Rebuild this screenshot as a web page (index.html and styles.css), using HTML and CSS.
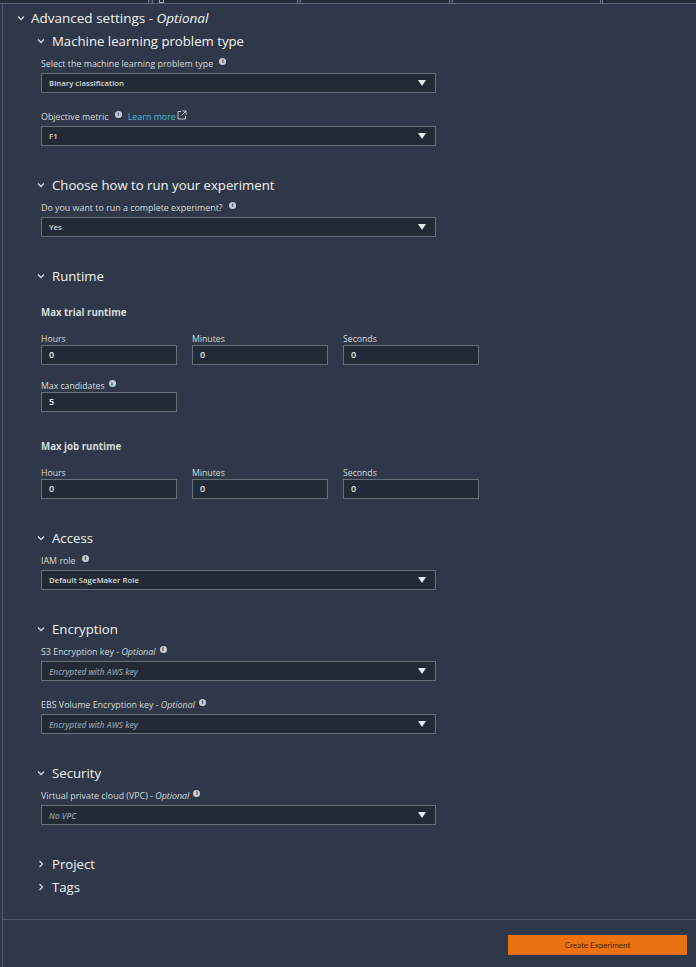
FILE: index.html
```html
<!DOCTYPE html>
<html>
<head>
<meta charset="utf-8">
<link rel="stylesheet" href="styles.css">
</head>
<body>
<div class="tabs">
  <div class="tab t1"></div>
  <div class="tab t2"><span class="tab-icon"></span></div>
  <div class="tab t3"></div>
  <div class="tab t4"></div>
  <div class="tab t5"></div>
</div>
<div class="panel">
  <div class="content">
    <div class="adv-header">
      <svg class="chev" width="8" height="6" viewBox="0 0 8 6"><path d="M1 1.5 L4 4.5 L7 1.5" fill="none" stroke="#d5dbdb" stroke-width="1.3"/></svg>
      <span>Advanced settings - <em>Optional</em></span>
    </div>

    <div class="section">
      <div class="sec-header">
        <svg class="chev" width="8" height="6" viewBox="0 0 8 6"><path d="M1 1.5 L4 4.5 L7 1.5" fill="none" stroke="#d5dbdb" stroke-width="1.3"/></svg>
        <span>Machine learning problem type</span>
      </div>
      <div class="label first">Select the machine learning problem type <span class="info">i</span></div>
      <div class="select"><span>Binary classification</span><span class="caret"></span></div>
      <div class="label">Objective metric <span class="info">i</span> <a class="learn">Learn more<svg class="ext" width="10" height="10" viewBox="0 0 10 10"><path d="M5.5 1 H9 V4.5 M9 1 L4.5 5.5 M4 1.5 H1 V9 H8.5 V6" fill="none" stroke="#d5dbdb" stroke-width="0.9"/></svg></a></div>
      <div class="select"><span>F1</span><span class="caret"></span></div>
    </div>

    <div class="section">
      <div class="sec-header">
        <svg class="chev" width="8" height="6" viewBox="0 0 8 6"><path d="M1 1.5 L4 4.5 L7 1.5" fill="none" stroke="#d5dbdb" stroke-width="1.3"/></svg>
        <span>Choose how to run your experiment</span>
      </div>
      <div class="label first">Do you want to run a complete experiment? <span class="info">i</span></div>
      <div class="select"><span>Yes</span><span class="caret"></span></div>
    </div>

    <div class="section">
      <div class="sec-header">
        <svg class="chev" width="8" height="6" viewBox="0 0 8 6"><path d="M1 1.5 L4 4.5 L7 1.5" fill="none" stroke="#d5dbdb" stroke-width="1.3"/></svg>
        <span>Runtime</span>
      </div>
      <div class="subhead">Max trial runtime</div>
      <div class="row">
        <div class="field"><div class="flabel">Hours</div><div class="input">0</div></div>
        <div class="field"><div class="flabel">Minutes</div><div class="input">0</div></div>
        <div class="field"><div class="flabel">Seconds</div><div class="input">0</div></div>
      </div>
      <div class="row">
        <div class="field"><div class="flabel cand">Max candidates <span class="info">i</span></div><div class="input">5</div></div>
      </div>
      <div class="subhead job">Max job runtime</div>
      <div class="row">
        <div class="field"><div class="flabel">Hours</div><div class="input">0</div></div>
        <div class="field"><div class="flabel">Minutes</div><div class="input">0</div></div>
        <div class="field"><div class="flabel">Seconds</div><div class="input">0</div></div>
      </div>
    </div>

    <div class="section">
      <div class="sec-header">
        <svg class="chev" width="8" height="6" viewBox="0 0 8 6"><path d="M1 1.5 L4 4.5 L7 1.5" fill="none" stroke="#d5dbdb" stroke-width="1.3"/></svg>
        <span>Access</span>
      </div>
      <div class="label first">IAM role <span class="info">i</span></div>
      <div class="select"><span>Default SageMaker Role</span><span class="caret"></span></div>
    </div>

    <div class="section">
      <div class="sec-header">
        <svg class="chev" width="8" height="6" viewBox="0 0 8 6"><path d="M1 1.5 L4 4.5 L7 1.5" fill="none" stroke="#d5dbdb" stroke-width="1.3"/></svg>
        <span>Encryption</span>
      </div>
      <div class="label first">S3 Encryption key - <em>Optional</em> <span class="info">i</span></div>
      <div class="select placeholder"><span>Encrypted with AWS key</span><span class="caret"></span></div>
      <div class="label">EBS Volume Encryption key - <em>Optional</em> <span class="info">i</span></div>
      <div class="select placeholder"><span>Encrypted with AWS key</span><span class="caret"></span></div>
    </div>

    <div class="section">
      <div class="sec-header">
        <svg class="chev" width="8" height="6" viewBox="0 0 8 6"><path d="M1 1.5 L4 4.5 L7 1.5" fill="none" stroke="#d5dbdb" stroke-width="1.3"/></svg>
        <span>Security</span>
      </div>
      <div class="label first">Virtual private cloud (VPC) - <em>Optional</em> <span class="info">i</span></div>
      <div class="select placeholder"><span>No VPC</span><span class="caret"></span></div>
    </div>

    <div class="section collapsed">
      <div class="sec-header">
        <svg class="chev" width="8" height="8" viewBox="0 0 8 8"><path d="M2.5 1 L5.5 4 L2.5 7" fill="none" stroke="#d5dbdb" stroke-width="1.3"/></svg>
        <span>Project</span>
      </div>
      <div class="sec-header tags">
        <svg class="chev" width="8" height="8" viewBox="0 0 8 8"><path d="M2.5 1 L5.5 4 L2.5 7" fill="none" stroke="#d5dbdb" stroke-width="1.3"/></svg>
        <span>Tags</span>
      </div>
    </div>
  </div>
  <div class="footer">
    <button class="create">Create Experiment</button>
  </div>
</div>
</body>
</html>
```

FILE: styles.css
```css
* { box-sizing: border-box; }
html, body {
  margin: 0;
  padding: 0;
  background: #2e3848;
  height: 100%;
}
body {
  font-family: "Open Sans", "Noto Sans", sans-serif;
  color: #d5dbdb;
  overflow: hidden;
}
.tabs {
  display: flex;
  height: 4px;
  border-bottom: 1px solid #5c6675;
}
.tab {
  height: 3px;
  background: #242d39;
  border-left: 1px solid #6a7482;
  border-right: 1px solid #6a7482;
}
.t1 { width: 149px; border-left: none; }
.t2 { width: 146px; margin-left: 3px; position: relative; }
.tab-icon { position: absolute; left: 6px; top: 0; width: 5px; height: 3px; border: 1px solid #aab; border-top: none; }
.t3 { width: 150px; margin-left: 2px; }
.t4 { width: 149px; margin-left: 2px; }
.t5 { flex: 1; margin-left: 1px; border-right: none; }

.panel {
  margin-left: 2px;
  border-left: 1px solid #4f5a69;
  min-height: calc(100% - 4px);
}
.content {
  padding: 4px 0 0 14px;
}
.adv-header {
  display: flex;
  align-items: center;
  height: 20px;
  font-size: 13.5px;
  color: #f2f3f3;
}
.adv-header .chev { margin-right: 6px; }
.adv-header em { font-style: italic; }
.section { padding-left: 20px; }
.section + .section { margin-top: 29px; }
.adv-header + .section { margin-top: 3px; }
.sec-header {
  display: flex;
  align-items: center;
  height: 20px;
  font-size: 13.2px;
  color: #f2f3f3;
}
.sec-header .chev { margin-right: 7px; }
.sec-header.tags { margin-top: 3px; }
.label {
  display: flex;
  align-items: center;
  height: 12px;
  margin: 17px 0 4px 4px;
  font-size: 8.9px;
  color: #d5dbdb;
  white-space: pre;
}
.label.first { margin-top: 6px; }
.label em { font-style: italic; }
.info {
  display: inline-flex;
  align-items: center;
  justify-content: center;
  width: 7px;
  height: 7px;
  border-radius: 50%;
  background: #c8ced6;
  color: #2e3848;
  font-size: 6px;
  font-weight: 700;
  line-height: 1;
  margin-left: 4px;
  margin-top: -4px;
}
.learn {
  color: #44b9d6;
  margin-left: 6px;
  display: inline-flex;
  align-items: center;
}
.ext { margin-left: 1px; margin-top: -3px; }
.select {
  display: flex;
  align-items: center;
  justify-content: space-between;
  width: 395px;
  height: 20px;
  margin-left: 4px;
  padding: 0 8px 0 7px;
  background: #222a35;
  border: 1px solid #687078;
  font-size: 7.8px;
  font-weight: 600;
  color: #d5dbdb;
}
.select.placeholder { font-style: italic; font-weight: 600; font-size: 8.2px; color: #8d99a8; }
.caret {
  width: 0; height: 0;
  border-left: 4px solid transparent;
  border-right: 4px solid transparent;
  border-top: 6px solid #e9ebed;
  margin-right: 1px;
}
.subhead {
  height: 12px;
  margin: 21px 0 0 4px;
  font-size: 9.7px;
  font-weight: 700;
  line-height: 12px;
  color: #d5dbdb;
}
.subhead.job { margin-top: 29px; }
.row {
  display: flex;
  gap: 15px;
  margin-left: 4px;
  margin-top: 14px;
}
.field { width: 136px; }
.flabel {
  height: 12px;
  line-height: 12px;
  font-size: 8.7px;
  color: #d5dbdb;
  display: flex;
  align-items: center;
}
.flabel.cand { height: 13px; }
.input {
  height: 20px;
  background: #222a35;
  border: 1px solid #687078;
  padding-left: 7px;
  font-size: 9px;
  font-weight: 600;
  line-height: 18px;
  color: #e9ebed;
}
.collapsed .sec-header .chev { margin-right: 7px; }
.footer {
  margin-top: 22px;
  border-top: 1px solid #4f5a69;
  display: flex;
  justify-content: flex-end;
  padding: 15px 9px 0 0;
}
.create {
  width: 179px;
  height: 20px;
  background: #ec7211;
  border: none;
  border-radius: 1px;
  font-family: "Lato", sans-serif;
  font-size: 8px;
  color: #4a2508;
  padding: 0;
}
```
